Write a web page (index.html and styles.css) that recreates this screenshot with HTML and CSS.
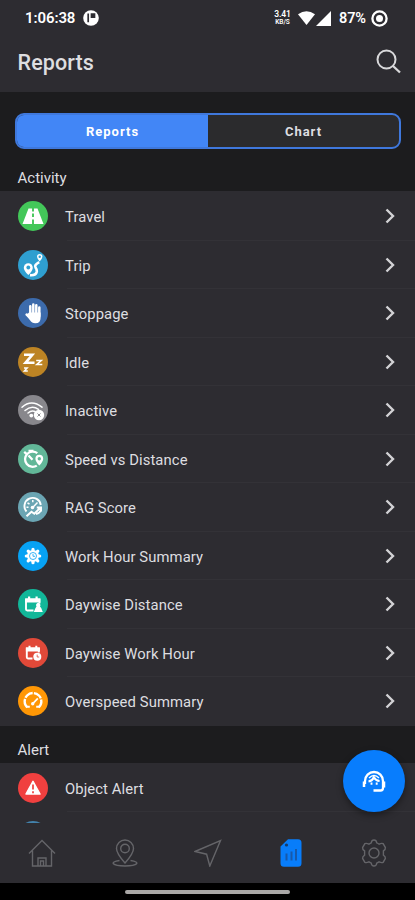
FILE: index.html
```html
<!DOCTYPE html>
<html lang="en">
<head>
<meta charset="utf-8">
<title>Reports</title>
<link rel="stylesheet" href="styles.css">
</head>
<body>
<div class="app">
  <header class="top">
    <div class="status">
      <span class="clock">1:06:38</span>
      <svg class="status-app" width="16" height="16" viewBox="0 0 16 16"><circle cx="8" cy="8" r="7.8" fill="#fff"/><path d="M5.2 3.6v8.6M8.5 4.2h3v3h-3z" fill="#2d2c31" stroke="#2d2c31" stroke-width="1.7"/></svg>
      <span class="rate"><b>3.41</b><b>KB/S</b></span>
      <svg class="wifi" width="17" height="14" viewBox="0 0 17 14"><path d="M0 3.2Q8.500-2.800 17 3.200L8.500 14z" fill="#fff"/></svg>
      <svg class="signal" width="15" height="15" viewBox="0 0 15 15"><path d="M15 0v15H0z" fill="#fff"/></svg>
      <span class="battery">87%</span>
      <svg class="ring" width="17" height="17" viewBox="0 0 17 17"><circle cx="8.500" cy="8.500" r="7.100" fill="none" stroke="#fff" stroke-width="2.300"/><circle cx="8.500" cy="8.500" r="3.500" fill="#fff"/></svg>
    </div>
    <div class="title-row">
      <h1>Reports</h1>
      <svg width="25" height="25" viewBox="0 0 25 25" fill="none" stroke="#d8d8da" stroke-width="2"><circle cx="10.500" cy="10.500" r="9"/><path d="M17 17l7 6.500" stroke-width="2.300"/></svg>
    </div>
  </header>

  <main class="content">
    <div class="segment"><span class="seg on">Reports</span><span class="seg">Chart</span></div>
    <h2 class="first">Activity</h2>
    <ul class="list">
      <li><svg class="ico" viewBox="0 0 30 30"><circle cx="15" cy="15" r="15" fill="#43c759"/><path d="M10.500 7.500h9L25.500 23h-21z" fill="#fff"/><path d="M15 7v3.500M15 12.500v3.500M15 18.500V23" stroke="#43c759" stroke-width="1.900"/></svg><span>Travel</span><svg class="chev" viewBox="0 0 10 16"><path d="M1.500 1.500L8 8l-6.500 6.500"/></svg></li>
      <li><svg class="ico" viewBox="0 0 30 30"><circle cx="15" cy="15" r="15" fill="#2f9fd0"/><path d="M10.300 25Q5.800 20.500 5.800 17.700a4.500 4.500 0 0 1 9 0Q14.800 20.500 10.300 25z" fill="#fff"/><circle cx="10.300" cy="17.500" r="1.900" fill="#2f9fd0"/><path d="M12 25.200q6 .5 6.800-3.700.3-2-1.300-4-1.700-2.200 3.700-5.300" fill="none" stroke="#fff" stroke-width="2.700"/><path d="M21.700 11.500Q19 8.200 19 6.700a2.700 2.700 0 0 1 5.400 0Q24.400 8.200 21.700 11.500z" fill="#fff"/><circle cx="21.700" cy="6.700" r="1.200" fill="#2f9fd0"/></svg><span>Trip</span><svg class="chev" viewBox="0 0 10 16"><path d="M1.500 1.500L8 8l-6.500 6.500"/></svg></li>
      <li><svg class="ico" viewBox="0 0 30 30"><circle cx="15" cy="15" r="15" fill="#3c6bac"/><g fill="none" stroke="#fff" stroke-width="2.500" stroke-linecap="round"><path d="M12.300 17V8.200M15.300 16V6.500M18.300 16V7.200M21.300 18V9.500M13 20.500l-4.400-4"/></g><path d="M11 14.500h11.600v5.300q0 5.500-5.300 5.500-3.500 0-5.300-3l-3.800-5z" fill="#fff"/></svg><span>Stoppage</span><svg class="chev" viewBox="0 0 10 16"><path d="M1.500 1.500L8 8l-6.500 6.500"/></svg></li>
      <li><svg class="ico" viewBox="0 0 30 30"><circle cx="15" cy="15" r="15" fill="#bd8424"/><g fill="none" stroke="#fff"><path d="M6 7.800h8.300L7.500 15.800h9" stroke-width="2.600"/><path d="M18.200 13.500h5l-4.400 4h5.500" stroke-width="1.600"/><path d="M6 21h3.200L6.300 24h3.500" stroke-width="1.400"/></g></svg><span>Idle</span><svg class="chev" viewBox="0 0 10 16"><path d="M1.500 1.500L8 8l-6.500 6.500"/></svg></li>
      <li><svg class="ico" viewBox="0 0 30 30"><circle cx="15" cy="15" r="15" fill="#88878c"/><g fill="none" stroke="#fff" stroke-width="1.500" stroke-linecap="round"><path d="M4 12.200q9.500-8.500 20 0M7 15.500q6.700-6 13.500-1.200M10 18q3.500-3 7-1.500"/></g><circle cx="13.300" cy="20.600" r="1.900" fill="#fff"/><circle cx="21" cy="20" r="5.200" fill="#fff"/><path d="M19.500 18.500l3 3M22.500 18.500l-3 3" stroke="#88878c" stroke-width="1"/></svg><span>Inactive</span><svg class="chev" viewBox="0 0 10 16"><path d="M1.500 1.500L8 8l-6.500 6.500"/></svg></li>
      <li><svg class="ico" viewBox="0 0 30 30"><circle cx="15" cy="15" r="15" fill="#62b798"/><g fill="none" stroke="#fff" stroke-width="2.300"><path d="M18.800 21.600a7.600 7.600 0 1 1 .5-12.400M10.500 6.800h5M6.200 7.800l2.200 2M10.500 11.500l4 4.200"/></g><path d="M21.300 21.500Q17.400 17.500 17.400 14.700a3.900 3.900 0 0 1 7.800 0Q25.200 17.500 21.300 21.500z" fill="#fff"/><circle cx="21.300" cy="14.700" r="1.700" fill="#62b798"/></svg><span>Speed vs Distance</span><svg class="chev" viewBox="0 0 10 16"><path d="M1.500 1.500L8 8l-6.500 6.500"/></svg></li>
      <li><svg class="ico" viewBox="0 0 30 30"><circle cx="15" cy="15" r="15" fill="#6ba5b3"/><g fill="none" stroke="#fff" stroke-width="1.900"><path d="M8.500 19.500A8.200 8.200 0 1 1 22.800 13"/><path d="M9.500 11l2 1M14.800 8v2.300M8.500 15.300h2M19.500 10.500l-4.800 5" stroke-width="1.500"/><path d="M8.500 24.300l5-4.500 2.800 2 6-6M18.800 15.500h4.200v4" stroke-width="2"/><path d="M18 22q4-1 5-4"/></g><circle cx="14.500" cy="15.500" r="1.800" fill="#fff"/></svg><span>RAG Score</span><svg class="chev" viewBox="0 0 10 16"><path d="M1.500 1.500L8 8l-6.500 6.500"/></svg></li>
      <li><svg class="ico" viewBox="0 0 30 30"><circle cx="15" cy="15" r="15" fill="#07a2f4"/><g stroke="#fff" stroke-width="3.200" stroke-linecap="round"><path d="M15 8.300v13.400M8.300 15h13.400M10.200 10.200l9.600 9.600M19.800 10.200l-9.600 9.600"/></g><circle cx="15" cy="15" r="6" fill="#fff"/><circle cx="15" cy="15" r="3.500" fill="none" stroke="#07a2f4" stroke-width=".8"/><path d="M15 13v2.300h2" stroke="#07a2f4" stroke-width=".8" fill="none"/></svg><span>Work Hour Summary</span><svg class="chev" viewBox="0 0 10 16"><path d="M1.500 1.500L8 8l-6.500 6.500"/></svg></li>
      <li><svg class="ico" viewBox="0 0 30 30"><circle cx="15" cy="15" r="15" fill="#12b799"/><path d="M15.500 21.500H9.200q-1.200 0-1.200-1.200V10.500h13.500v4" fill="none" stroke="#fff" stroke-width="1.900"/><path d="M7.300 9.500h15v4h-15zM10 7.500h2.200v3H10zM17.500 7.500h2.200v3h-2.200z" fill="#fff"/><path d="M15.800 23l1.700-4 1-1.500a2.200 2.200 0 1 1 3.500 0l1.200 1.500 1.600 4z" fill="#fff"/></svg><span>Daywise Distance</span><svg class="chev" viewBox="0 0 10 16"><path d="M1.500 1.500L8 8l-6.500 6.500"/></svg></li>
      <li><svg class="ico" viewBox="0 0 30 30"><circle cx="15" cy="15" r="15" fill="#e14939"/><path d="M14.500 20.500H10q-1.200 0-1.200-1.200V10.500h12v4" fill="none" stroke="#fff" stroke-width="1.900"/><path d="M7.900 9.500h14v4h-14zM10.500 7.800h2v2.500h-2zM17.300 7.800h2v2.500h-2z" fill="#fff"/><circle cx="19.300" cy="18.800" r="4" fill="#fff"/><path d="M19.200 16.600v2.400h2" fill="none" stroke="#e14939" stroke-width=".8"/></svg><span>Daywise Work Hour</span><svg class="chev" viewBox="0 0 10 16"><path d="M1.500 1.500L8 8l-6.500 6.500"/></svg></li>
      <li><svg class="ico" viewBox="0 0 30 30"><circle cx="15" cy="15" r="15" fill="#ff9705"/><path d="M9.200 21.300a8.300 8.300 0 1 1 11.600 0" fill="none" stroke="#fff" stroke-width="2.400" stroke-dasharray="9 1.200"/><path d="M14.500 18l5.300-5.700" stroke="#fff" stroke-width="1.800"/><circle cx="14.700" cy="17.800" r="1.700" fill="#fff"/><path d="M8.500 20.700h3.300M18.200 20.700h3.300" stroke="#fff" stroke-width="2"/></svg><span>Overspeed Summary</span><svg class="chev" viewBox="0 0 10 16"><path d="M1.500 1.500L8 8l-6.500 6.500"/></svg></li>
    </ul>
    <h2>Alert</h2>
    <ul class="list">
      <li><svg class="ico" viewBox="0 0 30 30"><circle cx="15" cy="15" r="15" fill="#f0403f"/><path d="M15 8.300L22 21h-14z" fill="#fff" stroke="#fff" stroke-width="1.500" stroke-linejoin="round"/><path d="M15 11.500v5M15 18.300v1.900" stroke="#f0403f" stroke-width="1.700"/></svg><span>Object Alert</span></li>
      <li><svg class="ico" viewBox="0 0 30 30"><circle cx="15" cy="15" r="15" fill="#4382ac"/></svg></li>
    </ul>
  </main>

  <nav class="tabs">
    <svg width="28" height="28" viewBox="0 0 28 28"><path d="M1 14.500L14 1.500l13 13M4.500 11.500V27h19V11.500M10 27v-8h8v8M12.500 22h3v5h-3z"/></svg>
    <svg width="28" height="28" viewBox="0 0 28 28"><path d="M14 24Q5.500 14.500 5.500 9.500a8.500 8.500 0 0 1 17 0Q22.500 14.500 14 24z"/><circle cx="14" cy="9.500" r="4.300"/><path d="M8.500 21.500C-2 23 1 27 14 27s16-4 5.500-5.500"/></svg>
    <svg width="28" height="28" viewBox="0 0 28 28"><path d="M1 12.500L26.500 1.500 15.800 27l-3.200-11.800z"/></svg>
    <svg width="28" height="28" viewBox="0 0 28 28"><path d="M11 .3h10a3.500 3.500 0 0 1 3.500 3.500v20.400a3.500 3.500 0 0 1-3.500 3.500H7a3.500 3.500 0 0 1-3.500-3.500V7.500z" class="file"/><path d="M9.500 14.500v7M14.500 12.500v9M19 10v11.500" class="bars"/><circle cx="9.500" cy="6" r="1.600" class="hole"/></svg>
    <svg width="28" height="28" viewBox="0 0 28 28"><path d="M11.300 3.800Q11.600 1 14 1t2.700 2.800l1.300.7 1.100.6q2.500-1.200 4-.5l2.300 4q.3 1.800-2 3.300v4.200q2.300 1.500 2 3.300l-2.300 4q-1.500.7-4-.5l-2.400 1.300Q16.400 27 14 27t-2.700-2.800l-2.400-1.300q-2.500 1.200-4 .5l-2.300-4q-.3-1.800 2-3.300v-4.200q-2.300-1.500-2-3.300l2.300-4q1.500-.7 4 .5z"/><circle cx="14" cy="14" r="5"/></svg>
  </nav>
  <footer class="gesture"><i></i></footer>

  <div class="fab"><svg width="24" height="23" viewBox="0 0 24 23" fill="none" stroke="#fff"><path d="M3 14V11a9 9 0 0 1 18 0v7q0 2.500-2.500 2.500H11.500" stroke-width="2.300"/><path d="M2 11.500v5.500M22 11.500v6" stroke-width="2.500"/><path d="M6.500 11.500q4-.7 5.300-4.200 2 3.500 5.800 3.700" stroke-width="2.200"/><path d="M7 8q5-5 10 0" stroke-width="1.300"/><path d="M9.500 12.500v2.200M14.700 12.500v2.200" stroke-width="1.900"/></svg></div>
</div>
</body>
</html>
```
FILE: styles.css
```css
* { box-sizing: border-box; }
body { margin: 0; background: #000; font-family: Roboto, "Liberation Sans", sans-serif; color: #dedee0; }
svg { display: block; flex: none; }
.app { position: relative; width: 415px; height: 900px; display: flex; flex-direction: column; overflow: hidden; background: #1c1c1e; }

.top { flex: none; height: 92px; background: #2d2c31; }
.status { display: flex; align-items: center; height: 36px; padding: 0 27px 0 25px; color: #fff; font-size: 15px; font-weight: 600; }
.clock { width: 50px; letter-spacing: -.1px; }
.status-app { margin-left: 8px; }
.rate { margin-left: auto; width: 17px; display: flex; flex-direction: column; align-items: center; font-size: 8.500px; line-height: 8px; letter-spacing: -.1px; }
.rate b { font-weight: 600; }
.rate b + b { font-size: 6.500px; }
.wifi { margin-left: 7px; }
.signal { margin-left: 1px; }
.battery { margin-left: 8px; width: 28px; font-size: 14.500px; letter-spacing: -.1px; }
.ring { margin-left: 4px; }
.title-row { display: flex; align-items: center; justify-content: space-between; height: 52px; padding: 0 14px 2px 17.500px; }
h1 { margin: 0; padding-top: 2px; font-size: 21.500px; font-weight: 500; letter-spacing: .1px; }

.content { flex: 1; min-height: 0; overflow: hidden; }
.segment { display: flex; height: 36px; margin: 21px 14px 0 15px; border: 2px solid #3f78dc; border-radius: 9px; background: #2b2b2d; overflow: hidden; }
.seg { flex: 1; display: flex; align-items: center; justify-content: center; font-size: 13px; font-weight: 700; letter-spacing: 1px; }
.seg.on { background: #4286f6; color: #fff; }
h2 { margin: 0; height: 37px; padding-left: 17.500px; font-size: 15px; line-height: 48px; font-weight: 400; letter-spacing: 0; }
h2.first { height: 42px; line-height: 58px; }
.list { margin: 0; padding: 1px 0 0; list-style: none; background: #2d2c31; }
.list li { display: flex; align-items: center; height: 48.500px; padding: 0 20px 0 18px; background: linear-gradient(#333237, #333237) 67px 100% / 100% 1px no-repeat; }
.list li:last-child { background: none; }
.list span { flex: 1; margin-left: 17px; padding-top: 2px; font-size: 14.800px; letter-spacing: .1px; }
.ico { width: 30px; height: 30px; }
.chev { width: 10px; height: 16px; fill: none; stroke: #d2d2d5; stroke-width: 2.400; }

.tabs { flex: none; height: 60px; display: flex; align-items: center; justify-content: space-between; padding: 0 27.500px; background: #2d2c31; fill: none; stroke: #656569; stroke-width: 1.400; }
.tabs .file { fill: #087dfa; stroke: none; }
.tabs .bars { stroke: #1759aa; stroke-width: 2; }
.tabs .hole { fill: #173b68; stroke: none; }
.gesture { flex: none; height: 17px; display: flex; justify-content: center; padding-top: 7px; background: #000; }
.gesture i { width: 165px; height: 4px; border-radius: 2px; background: #aaa8a7; }
.fab { position: absolute; left: 343px; top: 750px; width: 62px; height: 62px; border-radius: 50%; display: flex; align-items: center; justify-content: center; background: #087dfd; box-shadow: 0 3px 7px rgba(0,0,0,.4); }
```
